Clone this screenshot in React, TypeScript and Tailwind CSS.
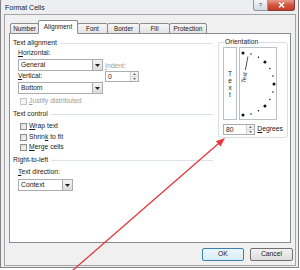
import React from "react";

const font = { fontFamily: '"Liberation Sans", Arial, sans-serif' };

const GroupHead = ({ label }: { label: string }) => (
  <div className="flex items-center h-[10px] gap-[3px]">
    <span className="whitespace-nowrap">{label}</span>
    <div className="flex-1 h-px bg-[#dde2e7]" />
  </div>
);

const Arrow = () => (
  <div className="w-[10px] h-full border-l border-[#a9a9a9] bg-gradient-to-b from-[#f4f4f4] to-[#dcdcdc] flex items-center justify-center">
    <svg width="5" height="3" viewBox="0 0 5 3">
      <path d="M0 0 H5 L2.5 3 Z" fill="#222" />
    </svg>
  </div>
);

const Dropdown = ({ value, w }: { value: string; w: string }) => (
  <div className={`${w} h-[12px] border border-[#abadb3] bg-white flex items-stretch`}>
    <span className="flex-1 pl-[2px] leading-[10px]">{value}</span>
    <Arrow />
  </div>
);

const Spin = ({ value, w }: { value: string; w: string }) => (
  <div className={`${w} h-[11px] border border-[#abadb3] bg-white flex items-stretch`}>
    <span className="flex-1 pl-[2px] leading-[9px]">{value}</span>
    <div className="w-[8px] flex flex-col border-l border-[#d0d0d0] bg-[#f2f2f2]">
      <div className="flex-1 flex items-center justify-center border-b border-[#d8d8d8]">
        <svg width="3" height="2" viewBox="0 0 3 2"><path d="M0 2 L1.5 0 L3 2 Z" fill="#6a6a6a" /></svg>
      </div>
      <div className="flex-1 flex items-center justify-center">
        <svg width="3" height="2" viewBox="0 0 3 2"><path d="M0 0 L3 0 L1.5 2 Z" fill="#6a6a6a" /></svg>
      </div>
    </div>
  </div>
);

const Check = ({ children, disabled }: { children: React.ReactNode; disabled?: boolean }) => (
  <div className={`flex items-center gap-[2px] pl-[7px] ${disabled ? "text-[#9a9a9a]" : ""}`}>
    <div
      className={`w-[7px] h-[7px] border ${
        disabled ? "border-[#c4c4c4] bg-[#f4f4f4]" : "border-[#8e8f8f] bg-gradient-to-br from-[#dcdcdc] to-[#f8f8f8]"
      }`}
    />
    <span>{children}</span>
  </div>
);

const Tab = ({ label, w, active }: { label: string; w: string; active?: boolean }) => (
  <div
    className={`${w} flex items-center justify-center border border-[#898c95] rounded-t-[2px] -ml-px text-[6.4px] ${
      active
        ? "h-[14px] bg-white border-b-white relative z-10"
        : "h-[11px] mt-[3px] bg-gradient-to-b from-[#f6f6f6] to-[#e3e3e3]"
    }`}
  >
    {label}
  </div>
);

const arcDots = () => {
  const cx = 3;
  const cy = 36;
  const r = 31;
  const dots = [];
  for (let a = 90; a >= -90; a -= 15) {
    const rad = (a * Math.PI) / 180;
    const big = a % 45 === 0;
    dots.push(
      <circle
        key={a}
        cx={cx + r * Math.cos(rad)}
        cy={cy - r * Math.sin(rad)}
        r={big ? 1.5 : 0.75}
        fill="#111"
      />
    );
  }
  return dots;
};

export default function App() {
  return (
    <div className="relative w-[300px] h-[270px] bg-white overflow-hidden text-[#1b1b1b] text-[6.8px]" style={font}>
      <div className="w-[299px] h-[268px] bg-[#eceef1] border-x border-b border-[#838383] flex flex-col">
        {/* title bar */}
        <div className="h-[14px] flex items-start">
          <span className="pl-[4px] pt-[4px] text-[7px] leading-[8px] text-[#222]">Format Cells</span>
          <div className="ml-auto mr-[3px] flex">
            <div className="w-[15px] h-[11px] border border-t-0 border-[#8d96a3] rounded-bl-[3px] bg-gradient-to-b from-[#f3f5f8] to-[#d6dbe2] flex items-center justify-center text-[6px] text-[#555]">
              ?
            </div>
            <div className="w-[27px] h-[11px] border border-t-0 border-l-0 border-[#8a3a32] rounded-br-[3px] bg-gradient-to-b from-[#e89a8d] via-[#d2553f] to-[#c23c26] flex items-center justify-center">
              <svg width="7" height="6" viewBox="0 0 7 6">
                <path d="M1 0.5 L6 5.5 M6 0.5 L1 5.5" stroke="#fff" strokeWidth="1.5" />
              </svg>
            </div>
          </div>
        </div>
        {/* dialog body */}
        <div className="flex-1 ml-[3px] mr-[2px] mb-[1px] border border-[#a5a5a5] bg-[#f0f0f0] flex flex-col pl-[4px]">
          <div className="flex items-end h-[19px] pl-[2px] pt-[5px]">
            <Tab label="Number" w="w-[29px]" />
            <Tab label="Alignment" w="w-[40px]" active />
            <Tab label="Font" w="w-[31px]" />
            <Tab label="Border" w="w-[33px]" />
            <Tab label="Fill" w="w-[31px]" />
            <Tab label="Protection" w="w-[38px]" />
          </div>
          <div className="w-[282px] h-[210px] -mt-px border border-[#898c95] bg-white flex pl-[3px] pt-[4px]">
            {/* left column */}
            <div className="w-[200px] flex flex-col">
              <GroupHead label="Text alignment" />
              <div className="flex pl-[5px]">
                <div className="flex flex-col">
                  <div className="h-[10px] flex items-center">
                    <span><u>H</u>orizontal:</span>
                  </div>
                  <div className="mt-[1px]">
                    <Dropdown value="General" w="w-[85px]" />
                  </div>
                  <div className="h-[11px] flex items-center">
                    <span><u>V</u>ertical:</span>
                  </div>
                  <Dropdown value="Bottom" w="w-[85px]" />
                </div>
                <div className="flex flex-col pl-[2px] pt-[14px]">
                  <div className="h-[9px] flex items-center text-[#a0a0a0]">
                    <span><u>I</u>ndent:</span>
                  </div>
                  <Spin value="0" w="w-[34px]" />
                </div>
              </div>
              <div className="h-[10px] mt-[2px] flex items-center">
                <Check disabled>
                  <u>J</u>ustify distributed
                </Check>
              </div>
              <div className="mt-[3px]">
                <GroupHead label="Text control" />
              </div>
              <div className="h-[11px] mt-[2px] flex items-center">
                <Check>
                  <u>W</u>rap text
                </Check>
              </div>
              <div className="h-[10px] flex items-center">
                <Check>
                  Shrin<u>k</u> to fit
                </Check>
              </div>
              <div className="h-[11px] flex items-center">
                <Check>
                  <u>M</u>erge cells
                </Check>
              </div>
              <div className="mt-[2px]">
                <GroupHead label="Right-to-left" />
              </div>
              <div className="h-[10px] mt-[2px] flex items-center pl-[5px]">
                <span><u>T</u>ext direction:</span>
              </div>
              <div className="mt-[2px] pl-[5px]">
                <Dropdown value="Context" w="w-[55px]" />
              </div>
            </div>
            {/* orientation */}
            <div className="ml-[5px] w-[70px]">
              <fieldset className="border border-[#d5dfe5] rounded-[3px] h-[100px] px-[4px] min-w-0">
                <legend className="px-[1px] ml-[1px] leading-[8px]">Orientation</legend>
                <div className="flex gap-[2px] mt-[1px]">
                  <div className="w-[14px] h-[73px] shrink-0 border border-[#b8c0c8] flex flex-col items-center justify-center leading-[7px] text-[6.5px]">
                    <span>T</span>
                    <span>e</span>
                    <span>x</span>
                    <span>t</span>
                  </div>
                  <div className="w-[38px] h-[73px] shrink-0 border border-[#b8c0c8]">
                    <svg width="36" height="71" viewBox="0 0 36 71">
                      {arcDots()}
                      <line x1="5.4" y1="22" x2="7.9" y2="8.5" stroke="#222" strokeWidth="0.8" />
                      <text
                        x="4"
                        y="38"
                        fontSize="6"
                        fill="#222"
                        fontFamily="Liberation Sans, Arial, sans-serif"
                        transform="rotate(-80 3 36)"
                      >
                        Text
                      </text>
                    </svg>
                  </div>
                </div>
                <div className="flex items-center mt-[4px] gap-[2px]">
                  <Spin value="80" w="w-[34px]" />
                  <span>
                    <u>D</u>egrees
                  </span>
                </div>
              </fieldset>
            </div>
          </div>
          {/* buttons */}
          <div className="flex justify-end gap-[6px] pt-[5px] pr-[2px]">
            <div className="w-[42px] h-[13px] border border-[#3c7fb1] rounded-[2px] bg-gradient-to-b from-[#eaf6fd] to-[#d9ecf8] flex items-center justify-center">
              OK
            </div>
            <div className="w-[43px] h-[13px] border border-[#707070] rounded-[2px] bg-gradient-to-b from-[#f2f2f2] to-[#dddddd] flex items-center justify-center">
              Cancel
            </div>
          </div>
        </div>
      </div>
      {/* red annotation arrow */}
      <svg className="absolute inset-0 pointer-events-none" width="300" height="270" viewBox="0 0 300 270">
        <line x1="72" y1="271" x2="218.5" y2="143.5" stroke="#e8373c" strokeWidth="1.3" />
        <path d="M225 138 L220.5 146.5 L215.9 141.3 Z" fill="#e8373c" />
      </svg>
    </div>
  );
}
